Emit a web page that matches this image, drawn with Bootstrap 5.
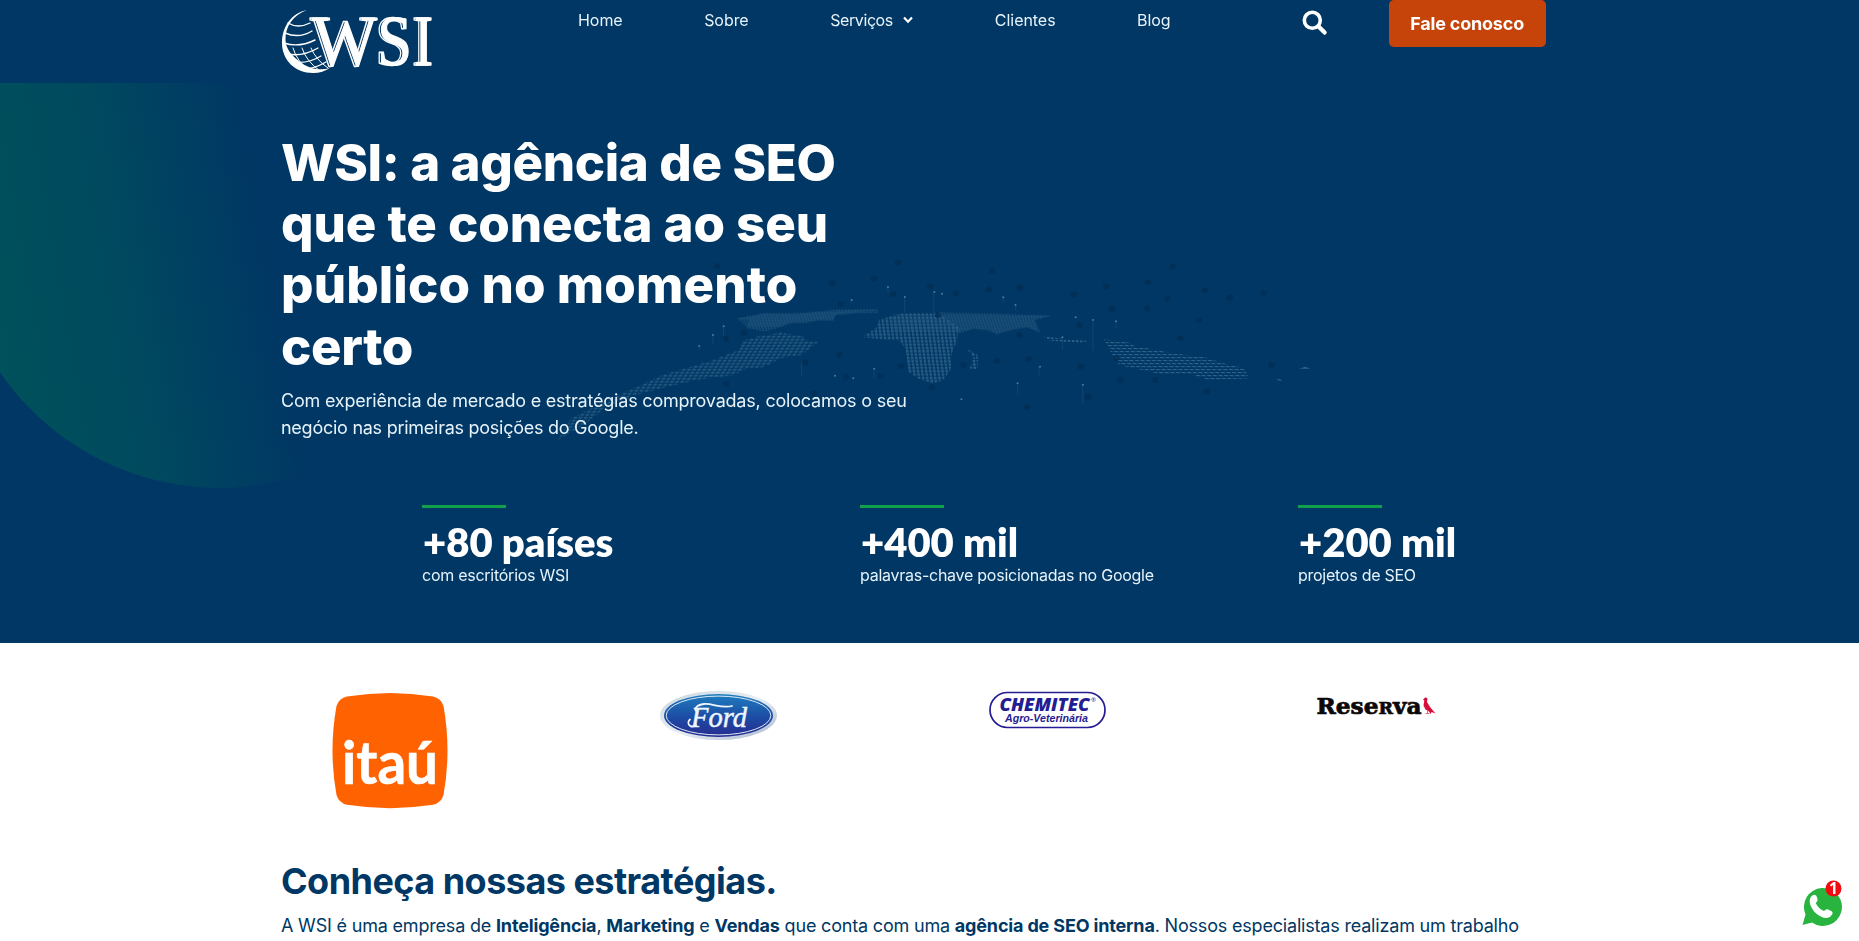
<!DOCTYPE html>
<html lang="pt-BR">
<head>
<meta charset="utf-8">
<meta name="viewport" content="width=device-width, initial-scale=1">
<title>WSI: agência de SEO</title>
<link href="https://cdn.jsdelivr.net/npm/bootstrap@5.3.0/dist/css/bootstrap.min.css" rel="stylesheet">
<style>
  body { font-family: Inter, "Open Sans", sans-serif; font-weight: 400; color: #003764; height: 941px; overflow: hidden; }
  .wrap { width: 1297px; margin: 0 auto; position: relative; }
  .hero { background: #003764; height: 643px; color: #fff; position: relative; overflow: hidden; }
  .decor { position: absolute; left: 0; top: 0; width: 100%; height: 100%; }
  .topbar { height: 83px; }
  .brand-logo { width: 160px; height: 80px; display: block; margin-left: -5px; }
  .menu { margin-left: 142px; gap: 81.5px; font-size: 16px; line-height: 24px; padding-top: 8px; }
  .menu a { color: #e6f3fa; text-decoration: none; letter-spacing: -.05px; }
  .menu .tight { letter-spacing: -.4px; }
  .menu .open-caret { margin-left: 10.5px; }
  .search { margin: 10px 0 0 131px; width: 26px; height: 26px; padding: 0; border: 0; background: none; line-height: 0; }
  .cta { margin-left: 61px; width: 157px; height: 47px; padding: 0; background: #c6430a; color: #fff; border: 0; border-radius: 5px; font-weight: 700; font-size: 18px; letter-spacing: -.2px; }
  .cta:hover { background: #a93806; color: #fff; }
  .headline { margin: 49px 0 10px; font-size: 51px; font-weight: 800; line-height: 61.2px; white-space: nowrap; }
  .l1 { letter-spacing: -.36px; } .l2 { letter-spacing: -.08px; } .l3 { letter-spacing: .12px; } .l4 { letter-spacing: -.4px; }
  .intro { font-size: 18px; line-height: 27px; margin: 0; color: #e6f3fa; letter-spacing: -.21px; white-space: nowrap; }
  .intro .second { letter-spacing: -.26px; }
  .stats { margin: 64px 0 0 141px; }
  .stat { width: 438px; flex: none; }
  .stat-rule { width: 84px; height: 3px; background: #10a04c; margin-bottom: 14.5px; }
  .stat-num { font: 800 40px/40px Lato, sans-serif; margin: 0 0 .5px 1px; }
  .stat-txt { font-size: 16px; line-height: 24px; margin: 0; color: #e6f3fa; letter-spacing: -.26px; }
  .clients { display: grid; grid-template-columns: repeat(4, 329px); margin-left: -56px; height: 217px; padding-top: 48px; justify-items: center; align-items: start; }
  .about h2 { font-size: 36px; font-weight: 700; line-height: 43px; margin: 0 0 8.5px; letter-spacing: -.53px; }
  .about p { font-size: 18px; line-height: 27px; margin: 0; white-space: nowrap; letter-spacing: -.19px; }
  .about b { font-weight: 700; letter-spacing: -.16px; }
  .whats { position: fixed; right: 17px; bottom: 11px; width: 42px; height: 52px; }
</style>
</head>
<body>
<section class="hero">
  <svg class="decor" viewBox="0 0 1859 643" preserveAspectRatio="none" aria-hidden="true">
    <defs>
      <linearGradient id="teal" gradientUnits="userSpaceOnUse" x1="-20" y1="330" x2="274" y2="279">
        <stop offset="0" stop-color="#00525b"/><stop offset=".5" stop-color="#00495f"/><stop offset=".75" stop-color="#004062"/><stop offset="1" stop-color="#003764"/>
      </linearGradient>
      <clipPath id="below"><rect x="0" y="83" width="600" height="500"/></clipPath>
      <pattern id="dots" width="10" height="9" patternUnits="userSpaceOnUse" patternTransform="skewX(-20)"><rect width="7" height="4" fill="#3d7296"/></pattern>
      <pattern id="fine" width="6" height="6" patternUnits="userSpaceOnUse" patternTransform="skewX(12)"><rect width="4" height="3" fill="#35688d"/></pattern>
      <pattern id="cols" width="8" height="10" patternUnits="userSpaceOnUse" patternTransform="skewX(5)"><rect width="5" height="7" fill="#3b6f94"/></pattern>
      <pattern id="east" width="11" height="9" patternUnits="userSpaceOnUse" patternTransform="skewX(35)"><rect width="8" height="4" fill="#3d7296"/></pattern>
    </defs>
    <circle cx="220" cy="221" r="267" fill="url(#teal)" clip-path="url(#below)"/>
    <!-- world map seen in perspective -->
    <svg x="540" y="240" width="800" height="230" viewBox="0 0 1568 690" preserveAspectRatio="none">
      <g opacity=".75">
        <path d="M385 235 L440 218 L500 222 L570 210 L662 206 L665 219 L610 222 L580 225 L575 242 L545 240 L520 250 L490 250 L470 262 L440 275 L405 264 L410 240Z" fill="url(#fine)"/>
        <path d="M385 235 L440 222 L570 214 L662 208 L580 225 L575 240 L500 246 L470 260 L405 262Z" fill="#35688d" opacity=".3"/>
        <path d="M425 290 L470 278 L515 288 L520 300 L545 306 L525 330 L510 345 L470 355 L440 380 L400 388 L380 405 L310 418 L250 440 L180 468 L130 500 L90 550 L35 600 L60 535 L150 468 L240 405 L330 365 L390 330 L395 305Z" fill="url(#dots)"/>
        <path d="M632 290 L660 262 L665 238 L710 220 L780 218 L820 262 L818 300 L808 335 L805 390 L790 420 L770 430 L740 415 L722 395 L716 330 L705 300 L680 300 L640 292Z" fill="url(#cols)"/>
        <path d="M780 216 L1005 226 L970 240 L980 278 L955 262 L930 266 L895 284 L880 268 L850 266 L822 280Z" fill="url(#fine)"/>
        <path d="M690 222 L1005 226 L970 240 L980 276 L955 262 L895 280 L850 266 L822 276 L690 272Z" fill="#35688d" opacity=".22"/>
        <path d="M835 325 L858 345 L858 390 L842 385 L850 350Z M985 288 L1030 298 L1075 303 L1060 308 L1000 302Z" fill="url(#cols)"/>
        <path d="M1105 298 L1150 305 L1165 318 L1200 328 L1250 342 L1300 350 L1340 370 L1380 385 L1390 415 L1310 420 L1280 405 L1215 402 L1135 375 L1120 340Z" fill="url(#east)"/>
        <path d="M1488 386 l12 -6 l10 6Z M1442 420 l8 -3 l5 6Z" fill="#3d7296"/>
        <path d="M715 170V218 M772 155V220 M1084 240V332 M1024 292V330 M682 140V160 M908 172V188 M932 196V212 M360 258V300 M339 284V315 M312 317V332 M513 365V410 M655 385V415 M936 430V465 M1064 435V490 M1129 243V265 M610 178V190 M978 380V410" stroke="#4b7da0" stroke-width="1.6" opacity=".5" fill="none"/>
      </g>
      <g fill="#487b9c" id="sparks"></g>
      <g fill="#002b51" opacity=".65" id="pins"></g>
    </svg>
  </svg>

  <div class="wrap">
    <header class="topbar d-flex align-items-start">
      <svg class="brand-logo flex-shrink-0" viewBox="276 0 160 80" role="img" aria-label="WSI">
        <g fill="none" stroke="#fff" stroke-linecap="round">
          <path d="M307 10 C292 13 282 26 282 43 C282 60 295 73 313 73 C320 73 325 71 330 68 C320 71 308 69 299 61 C290 54 286 48 285.500 40 C285 27 293 15 307 10Z" fill="#fff" stroke="none"/>
          <path d="M288 23 Q298 29 310 23" stroke-width="1.300"/>
          <path d="M285 33 Q299 39 312 31" stroke-width="1.400"/>
          <path d="M284 43 Q299 48 315 40" stroke-width="1.400"/>
          <path d="M287 54 Q303 57 318 48" stroke-width="1.300"/>
          <path d="M294 62 Q308 64 321 56 M303 69 Q314 69 326 62" stroke-width="1.200"/>
          <path d="M293 48 Q297 63 312 72 M302 48 Q306 61 320 71 M311 48 Q316 60 328 68" stroke-width="1"/>
        </g>
        <g font-family="Liberation Serif, serif" font-size="71" stroke="#fff" stroke-linejoin="round">
          <g transform="translate(310 64.500) scale(.97 1)"><text fill="#003764" stroke-width="1.400">W</text><text x="2.400" fill="#fff" stroke-width="1.100">W</text></g>
          <g transform="translate(375 64.500) scale(.88 1)"><text fill="#003764" stroke-width="1.400">S</text><text x="2.600" fill="#fff" stroke-width="1.200">S</text></g>
          <g transform="translate(412 64.500) scale(.79 1)"><text fill="#003764" stroke-width="1.400">I</text><text x="2.800" fill="#fff" stroke-width="1.600">I</text></g>
        </g>
      </svg>
      <nav class="menu d-flex flex-shrink-0">
        <a href="#">Home</a>
        <a href="#">Sobre</a>
        <a href="#" class="d-flex align-items-center tight">Serviços
          <svg class="open-caret" width="10" height="8" viewBox="0 0 10 8"><path d="M1 1.500 5 5.700 9 1.500" fill="none" stroke="#fff" stroke-width="2.200"/></svg></a>
        <a href="#">Clientes</a>
        <a href="#">Blog</a>
      </nav>
      <button class="search flex-shrink-0" aria-label="Buscar">
        <svg width="26" height="26" viewBox="0 0 26 26"><circle cx="10.300" cy="10.300" r="8" fill="none" stroke="#fff" stroke-width="3.600"/><path d="M16.300 16.300 22.600 22.600" stroke="#fff" stroke-width="4.300" stroke-linecap="round"/></svg>
      </button>
      <a href="#" class="cta btn d-flex align-items-center justify-content-center flex-shrink-0">Fale conosco</a>
    </header>

    <h1 class="headline"><span class="d-block l1">WSI: a agência de SEO</span><span class="d-block l2">que te conecta ao seu</span><span class="d-block l3">público no momento</span><span class="d-block l4">certo</span></h1>
    <p class="intro">Com experiência de mercado e estratégias comprovadas, colocamos o seu<br><span class="second">negócio nas primeiras posições do Google.</span></p>

    <div class="stats d-flex">
      <div class="stat"><div class="stat-rule"></div><h3 class="stat-num">+80 países</h3><p class="stat-txt">com escritórios WSI</p></div>
      <div class="stat"><div class="stat-rule"></div><h3 class="stat-num">+400 mil</h3><p class="stat-txt">palavras-chave posicionadas no Google</p></div>
      <div class="stat"><div class="stat-rule"></div><h3 class="stat-num">+200 mil</h3><p class="stat-txt">projetos de SEO</p></div>
    </div>
  </div>
</section>

<main class="wrap">
  <div class="clients">
    <svg width="120" height="120" viewBox="330 691 120 120" role="img" aria-label="Itaú">
      <path d="M347 696.500 Q390 689.500 433 696.500 Q441 698 443.500 706 Q451.500 750.500 443.500 795 Q441 803 433 804.800 Q390 811.500 347 804.800 Q339 803 336.500 795 Q328.500 750.500 336.500 706 Q339 698 347 696.500Z" fill="#ff6200"/>
      <text x="342" y="784" font-family="Lato, sans-serif" font-weight="700" font-size="59" fill="#fff" stroke="#fff" stroke-width=".6" textLength="96" lengthAdjust="spacingAndGlyphs">itaú</text>
    </svg>
    <svg width="120" height="54" viewBox="659 691 120 54" role="img" aria-label="Ford">
      <defs>
        <linearGradient id="fordBlue" x1="0" y1="0" x2="0" y2="1"><stop offset="0" stop-color="#1f7ec0"/><stop offset=".5" stop-color="#1c4fa6"/><stop offset="1" stop-color="#272b90"/></linearGradient>
        <linearGradient id="chrome" x1="0" y1="0" x2="1" y2="1"><stop offset="0" stop-color="#c9d6dd"/><stop offset=".5" stop-color="#e9eef4"/><stop offset="1" stop-color="#a9b7ce"/></linearGradient>
      </defs>
      <ellipse cx="718.500" cy="715.500" rx="58.500" ry="24.500" fill="url(#chrome)"/>
      <ellipse cx="718.500" cy="715.500" rx="54.500" ry="21.500" fill="url(#fordBlue)"/>
      <ellipse cx="718.500" cy="715.500" rx="52.300" ry="19.400" fill="none" stroke="#dfe9f5" stroke-width="1"/>
      <text x="691" y="726.500" font-family="Liberation Serif, serif" font-style="italic" font-size="29" fill="#eef6ff" stroke="#eef6ff" stroke-width=".5" textLength="56" lengthAdjust="spacingAndGlyphs">Ford</text>
      <path d="M732 706 C722 709 712 703 704 704 C696 705 693 710 697 711.500 M696 725 C690 729 686 723 690 719.500" fill="none" stroke="#eef6ff" stroke-width="1.800" stroke-linecap="round"/>
    </svg>
    <svg width="120" height="40" viewBox="988 691 120 40" role="img" aria-label="Chemitec Agro-Veterinária">
      <rect x="990" y="692.500" width="115" height="35" rx="17.500" fill="#fff" stroke="#241c93" stroke-width="1.700"/>
      <g font-family="Open Sans, sans-serif" font-style="italic" font-weight="800" fill="#241c93">
        <text x="999.500" y="710.800" font-size="17.800" textLength="90" lengthAdjust="spacingAndGlyphs">CHEMITEC</text>
        <text x="1091" y="702" font-size="6" font-style="normal" font-weight="400">®</text>
        <text x="1005" y="721.800" font-family="Liberation Sans, sans-serif" font-weight="700" font-size="10.500" textLength="83" lengthAdjust="spacingAndGlyphs">Agro-Veterinária</text>
      </g>
    </svg>
    <svg width="124" height="30" viewBox="1315.500 691 124 30" role="img" aria-label="Reserva">
      <text x="1317" y="714" font-family="DejaVu Serif, serif" font-weight="700" font-size="22" fill="#0b0809" stroke="#0b0809" stroke-width=".7" textLength="105" lengthAdjust="spacingAndGlyphs">Rese<tspan font-size="16.500">R</tspan>va</text>
      <path d="M1423.500 699.500 L1426 697.300 L1428 698.500 L1427.500 702 L1430.500 707 L1436 713.500 L1432 712 L1431 714 L1429.500 711.500 L1426 709.500 L1424 705.500 L1424.800 700.500Z" fill="#d80f3c"/>
      <path d="M1428 711v2.500M1426 713.500h4" stroke="#d80f3c" stroke-width=".6"/>
    </svg>
  </div>
  <section class="about">
    <h2>Conheça nossas estratégias.</h2>
    <p>A WSI é uma empresa de <b>Inteligência</b>, <b>Marketing</b> e <b>Vendas</b> que conta com uma <b>agência de SEO interna</b>. Nossos especialistas realizam um trabalho</p>
  </section>
</main>

<a href="#" class="whats" aria-label="WhatsApp">
  <svg width="42" height="52" viewBox="1801 879 42 52">
    <path d="M1803.500 926 L1806.500 915.500 A19 19 0 1 1 1813 923.500Z" fill="#29b43f"/>
    <path d="M1813.300 896.500 C1816 895 1817.500 896 1818.500 900 C1819 902 1817.500 903 1816.800 904.300 C1818.500 908 1821.500 910.800 1825 912 C1826.500 911 1827.500 909.500 1829.500 910.700 C1834 912.500 1834.500 913.500 1832.500 916.300 C1829.500 920.500 1823 919.500 1817.500 914.800 C1811.500 909.500 1808 900.500 1813.300 896.500Z" fill="#fff"/>
    <circle cx="1834.500" cy="889.500" r="8" fill="#f00d12"/>
    <text x="1834.500" y="895" text-anchor="middle" font-family="Open Sans, sans-serif" font-weight="700" font-size="15.500" fill="#fff">1</text>
  </svg>
</a>

<script src="https://cdn.jsdelivr.net/npm/bootstrap@5.3.0/dist/js/bootstrap.bundle.min.js"></script>
<script>
  // floating points around the map: dark pins and light sparks
  const pins = [[348,78],[702,68],[886,92],[1240,80],[572,128],[655,117],[765,140],[880,148],[941,143],[1110,140],[1192,127],[1303,151],[1418,159],[1046,163],[1230,175],[1352,173],[693,162],[815,160],[1122,206],[1190,206],[1292,240],[590,192],[400,278],[364,295],[1058,257],[1255,295],[940,286],[780,226],[587,343],[520,368],[708,378],[830,375],[896,362],[958,357],[1060,380],[1130,355],[1433,375],[600,410],[668,408],[1137,420],[1206,420],[365,432],[768,442],[1307,455],[1074,470],[954,502],[536,460]];
  const sparks = [[715,171],[773,156],[682,141],[788,161],[908,172],[932,195],[611,180],[1084,240],[1129,244],[360,259],[339,285],[312,318],[1024,292],[578,407],[614,415],[655,386],[980,380],[936,430],[1064,434],[826,478],[1050,232]];
  const draw = (id, list, rx, ry) => document.getElementById(id).innerHTML = list.map(([x, y]) => `<ellipse cx="${x}" cy="${y}" rx="${rx}" ry="${ry}"/>`).join('');
  draw('pins', pins, 6, 8.5);
  draw('sparks', sparks, 2, 3);
</script>
</body>
</html>
